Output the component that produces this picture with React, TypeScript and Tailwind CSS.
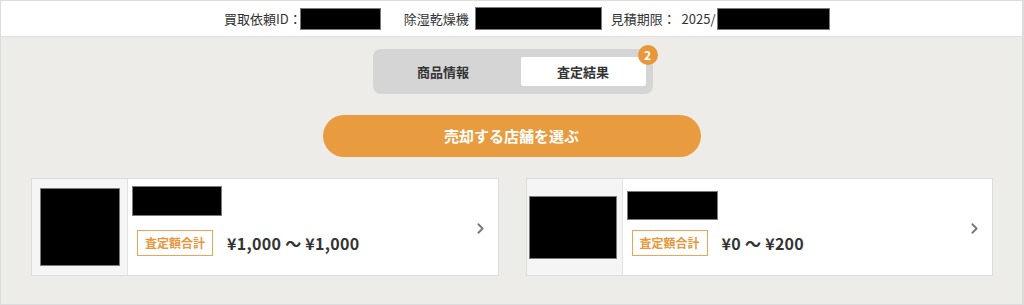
import { ChevronRight } from "lucide-react";

const font = { fontFamily: '"Noto Sans CJK JP", "Liberation Sans", sans-serif' };

function Redacted({ className }: { className: string }) {
    return <div className={`bg-black border border-[#7a7a7a] ${className}`}></div>;
}

type Item = {
    imgBox: string;
    img: string;
    title: string;
    price: string;
};

const items: Item[] = [
    {
        imgBox: "items-center justify-center pl-[1px]",
        img: "w-[80px] h-[78px]",
        title: "w-[90px] h-[30px] mt-[7px] mb-[14px]",
        price: "¥1,000 ～ ¥1,000",
    },
    {
        imgBox: "items-center justify-center pr-[2px]",
        img: "w-[88px] h-[63px]",
        title: "w-[91px] h-[29px] mt-[12px] mb-[10px]",
        price: "¥0 ～ ¥200",
    },
];

function ResultCard({ item }: { item: Item }) {
    return (
        <div className="flex flex-row h-[98px] bg-white border border-[#dcdcdc]">
            <div className={`flex w-[96px] bg-[#f5f5f5] border-r border-[#e2e2e2] ${item.imgBox}`}>
                <Redacted className={item.img} />
            </div>
            <div className="flex flex-col flex-1 pl-[9px]">
                <Redacted className={`-ml-[5px] ${item.title}`} />
                <div className="flex flex-row items-center">
                    <span className="flex items-center justify-center w-[76px] h-[26px] border border-[#eba55a] text-[#e8973b] text-[12px] font-bold">
                        査定額合計
                    </span>
                    <span className="ml-[14px] text-[16px] font-semibold text-[#333] tracking-[0.3px] whitespace-pre">
                        {item.price}
                    </span>
                </div>
            </div>
            <div className="flex items-center pr-[9px] pt-[2px]">
                <ChevronRight className="w-[17px] h-[17px] text-[#777]" strokeWidth={2.6} />
            </div>
        </div>
    );
}

export default function App() {
    return (
        <div
            className="w-[1024px] h-[305px] flex flex-col bg-[#edece8] border-l border-t border-r-2 border-b border-[#dcdcdc]"
            style={font}
        >
            <div className="flex flex-row items-center h-[36px] bg-white border-b border-[#e0e0e0] pl-[223px] text-[13px] text-[#333]">
                <span>買取依頼ID：</span>
                <Redacted className="-ml-[2px] w-[81px] h-[22px]" />
                <span className="ml-[23px]">除湿乾燥機</span>
                <Redacted className="ml-[6px] w-[127px] h-[23px]" />
                <span className="ml-[9px]">見積期限：&nbsp;&nbsp;2025/</span>
                <Redacted className="ml-[1px] w-[113px] h-[22px]" />
            </div>

            <div className="flex justify-center mt-[12px] pl-[2px]">
                <div className="flex flex-row gap-[15px] pl-[8px] pr-[7px] py-[8px] bg-[#d5d5d5] rounded-[8px]">
                    <div className="flex items-center justify-center w-[125px] h-[29px] text-[13px] font-bold text-[#333]">
                        商品情報
                    </div>
                    <div className="relative flex items-center justify-center w-[125px] h-[29px] bg-white rounded-[2px] text-[13px] font-bold text-[#333]">
                        査定結果
                        <span className="absolute -top-[12px] -right-[12px] flex items-center justify-center w-[20px] h-[20px] rounded-full bg-[#e8973b] text-white text-[12px] font-bold">
                            2
                        </span>
                    </div>
                </div>
            </div>

            <div className="flex justify-center mt-[21px]">
                <button className="w-[378px] h-[42px] rounded-full bg-[#e89b3f] text-white text-[15px] font-bold">
                    売却する店舗を選ぶ
                </button>
            </div>

            <div className="grid grid-cols-2 gap-[27px] mt-[21px] pl-[30px] pr-[29px]">
                {items.map((item, i) => (
                    <ResultCard key={i} item={item} />
                ))}
            </div>
        </div>
    );
}
